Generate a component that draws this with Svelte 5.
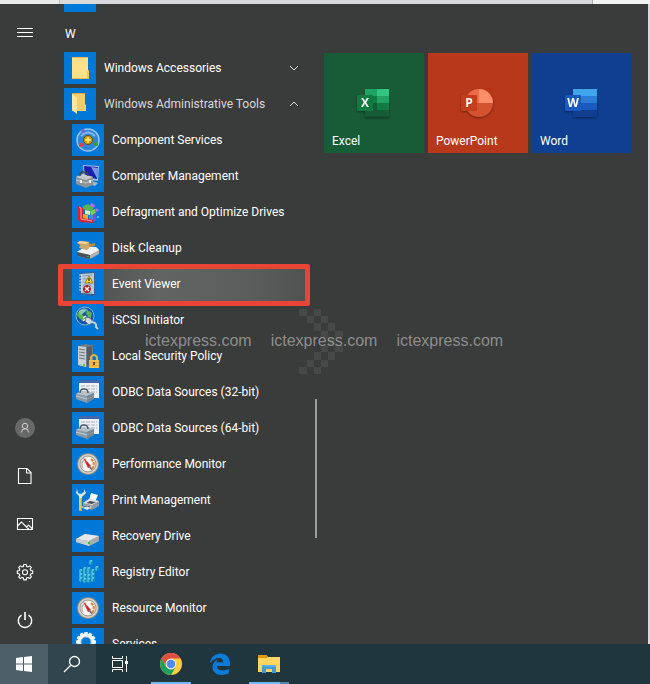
<script lang="ts">
    type App = { name: string; icon: string };

    const tools: App[] = [
        { name: "Component Services", icon: "component" },
        { name: "Computer Management", icon: "computer" },
        { name: "Defragment and Optimize Drives", icon: "defrag" },
        { name: "Disk Cleanup", icon: "cleanup" },
        { name: "Event Viewer", icon: "event" },
        { name: "iSCSI Initiator", icon: "iscsi" },
        { name: "Local Security Policy", icon: "security" },
        { name: "ODBC Data Sources (32-bit)", icon: "odbc" },
        { name: "ODBC Data Sources (64-bit)", icon: "odbc" },
        { name: "Performance Monitor", icon: "gauge" },
        { name: "Print Management", icon: "print" },
        { name: "Recovery Drive", icon: "recovery" },
        { name: "Registry Editor", icon: "registry" },
        { name: "Resource Monitor", icon: "gauge" },
        { name: "Services", icon: "services" },
    ];
    const tiles = ["Excel", "PowerPoint", "Word"];
    const rail = ["Account", "Documents", "Pictures", "Settings", "Power"];
    const teeth = [0, 30, 60, 90, 120, 150, 180, 210, 240, 270, 300, 330];
    const cubes = [
        [7, 14], [11, 15], [15, 15], [19, 14],
        [7, 18], [11, 19], [15, 19], [19, 18],
        [7, 22], [11, 23], [15, 23], [19, 22],
        [11, 12], [15, 12], [17, 5], [23, 11],
    ];
    // [column, row] of the checkered arrow behind the watermark
    const checks = [
        [0, 0], [2, 0], [1, 1], [3, 1], [2, 2], [4, 2], [3, 3], [5, 3], [4, 4],
        [3, 5], [5, 5], [2, 6], [4, 6], [1, 7], [3, 7], [0, 8], [2, 8],
    ];

    let toolsOpen = $state(true);
    let selected = $state("Event Viewer");
</script>

{#snippet appIcon(name: string)}
    <svg class="app-icon" viewBox="0 0 32 32" aria-hidden="true">
        {#if name === "folder"}
            <path d="M8 5h16v13l1 1v8H8z" fill="#ffe08a" />
            <path d="M8 5h16v1H8zM8 26h17v1H8z" fill="#e9bd55" />
            <path d="M23 20l2-2v8h-2z" fill="#f5c84c" />
        {:else if name === "folder-open"}
            <path d="M8 5h13v12l1 1v5H8z" fill="#f3cd6b" />
            <path d="M8 5h13v1H8z" fill="#d8a83b" />
            <path d="M8 6l5 4v16l-5-4z" fill="#ffe7a0" />
            <path d="M20 18l2-2v7h-2z" fill="#ffd65c" />
        {:else if name === "component"}
            <circle cx="16" cy="16" r="11" fill="#2a86d8" stroke="#9cc3e6" stroke-width="1.5" />
            <path d="M9 12q7-7 14 0" fill="none" stroke="#7eb9ea" stroke-width="2" />
            <circle cx="16" cy="16" r="4.5" fill="#d79b12" stroke="#6f4908" />
            <path d="M16 13v6M13 16h6" stroke="#ffed65" stroke-width="1.5" />
            <circle cx="11" cy="7" r="2" fill="#7866d8" />
            <circle cx="9" cy="21" r="2.2" fill="#d8454c" />
            <circle cx="24" cy="20" r="2.2" fill="#379c43" />
        {:else if name === "computer"}
            <path d="M11 5l16 1-1 15-14-2z" fill="#aebfe0" />
            <path d="M12 6l14 1-1 12-12-2z" fill="#1722a9" />
            <path d="M19 7l7 1-1 10z" fill="#7d91ee" />
            <path d="M20 21l6 2-3 3-5-2z" fill="#aeb6bd" />
            <path d="M4 17l7-3 10 3v8l-7 3-10-4z" fill="#8d959b" />
            <path d="M4 17l7-3 10 3-7 3z" fill="#c3c9cc" />
            <path d="M8 16q0-5 4-4 4 0 4 4" fill="none" stroke="#3f464b" stroke-width="1.5" />
            <path d="M4 20l10 3 7-3" fill="none" stroke="#c3c9cc" />
            <path d="M8 20h2v3H8zM17 20h2v3h-2z" fill="#eef0f1" />
        {:else if name === "defrag"}
            <path d="M6 10l5 2v10l11 1v4l-14-1-2-2z" fill="#d72332" />
            <path d="M7 11l2 1v11l11 2" fill="none" stroke="#ffaaa5" />
            <path d="M11 10l5-2 5 3v3l-4 1-6-2z" fill="#54b64d" />
            <path d="M13 14l5 1v4l-5-1z" fill="#d8efc8" />
            <path d="M18 15l5-2 1 5-5 2z" fill="#79ce54" />
            <path d="M11 18l5 1v4l-5-1z" fill="#edae25" />
            <path d="M17 19l4 1v4l-4-1z" fill="#358ce1" />
            <path d="M21 18l3-1v7l-3 2z" fill="#8e46c9" />
            <path d="M19 7l4 2-1 3-4-2zM24 12l3 2-2 2-2-2z" fill="#b46be8" />
            <path d="M25 20h2v2h-2z" fill="#36c5ed" />
        {:else if name === "cleanup"}
            <path d="M5 20l8-5h11l3 3v4l-9 5-13-3z" fill="#aeb2b4" />
            <path d="M5 20l8-5h11l3 3-9 5z" fill="#f0f1f1" />
            <path d="M5 20l13 3v4L5 24z" fill="#4b5155" />
            <path d="M8 9l9 1 1 5-3 3-8-2 1-3-3-2z" fill="#cda96c" />
            <path d="M8 9l9 1-3 2-9-1z" fill="#f0d69d" />
            <path d="M17 12l6-1v3l-5 1z" fill="#b88d4b" />
            <path d="M15 24h2v1h-2z" fill="#32ae48" />
        {:else if name === "event"}
            <path d="M7 5l16-1v23l-2 1-14-2z" fill="#3f608d" />
            <path d="M9 6l13-1v21l-13-1z" fill="#b6cbe0" />
            <path d="M11 8l9-1M11 11h9M11 14h9M11 17h9M11 24l9 1" stroke="#839fb9" />
            <path d="M7 7h3M7 10h3M7 13h3M7 16h3M7 19h3M7 22h3" stroke="#dfe8ee" />
            <path d="M17 8l4 7h-8z" fill="#ffdf28" stroke="#a57c09" />
            <path d="M17 10v3M17 14v1" stroke="#2f2b12" stroke-width="1.2" />
            <circle cx="15" cy="21" r="3.5" fill="#d82125" stroke="#8d1b1e" />
            <path d="M13 19l4 4M17 19l-4 4" stroke="#fff" stroke-width="1.3" />
        {:else if name === "iscsi"}
            <circle cx="13" cy="12" r="9" fill="#1653a4" stroke="#7fb9dc" />
            <path d="M6 8q4-4 8-2l-2 3-2 1 3 3-2 4-4-3-2-3zM15 6l5 3-1 5-3-1-2-4z" fill="#53b556" />
            <path d="M7 7q5-5 9-1l-8 5z" fill="#a9daef" opacity=".6" />
            <path d="M14 13l4 1 3 4-4 3-4-4z" fill="#d4dadd" stroke="#69747a" />
            <path d="M11 14l3-2M11 17l2-2" stroke="#f7f7f7" stroke-width="1.5" />
            <path d="M19 18q6 0 5 5l2 2" fill="none" stroke="#c9d0d4" stroke-width="2" />
        {:else if name === "security"}
            <path d="M6 6l7-2 8 1v20l-7 2-8-2z" fill="#737c83" />
            <path d="M6 6l8 1v20l-8-2z" fill="#c8cfd3" />
            <path d="M7 9l6 1M7 12l6 1M7 15l6 1M7 18l6 1" stroke="#69737b" />
            <path d="M15 7l5-1v18l-5 2z" fill="#535e66" />
            <path d="M11 24h2v2h-2z" fill="#58cf47" />
            <path d="M19 20v-3q3-4 6 0v3" fill="none" stroke="#d6b553" stroke-width="2" />
            <path d="M17 20h10v8H17z" fill="#e5a92d" />
            <path d="M17 21h10M17 24h10M17 27h10" stroke="#fbd673" />
            <path d="M22 22v3" stroke="#6b4a12" stroke-width="2" />
        {:else if name === "odbc"}
            <path d="M7 4h20v18H7z" fill="#eef1f4" />
            <path d="M7 4h20v3H7z" fill="#4266aa" />
            <path d="M9 10h16M9 13h16M9 16h16" stroke="#a6b2bf" stroke-dasharray="4 1" />
            <path d="M4 18l5-3 13 2v6l-7 4-11-4z" fill="#8a9ba8" />
            <path d="M4 18l5-3 13 2-7 3z" fill="#b4c1c9" />
            <path d="M8 17q0-4 4-4t4 4" fill="none" stroke="#4d5d69" stroke-width="1.5" />
            <path d="M4 20l11 3 7-3" fill="none" stroke="#c0cdd4" />
            <path d="M15 20v7l7-4v-6z" fill="#62737f" opacity=".5" />
        {:else if name === "gauge"}
            <circle cx="16" cy="16" r="11" fill="#8f8b85" />
            <circle cx="16" cy="16" r="10" fill="#d5d2cb" />
            <circle cx="16" cy="16" r="8" fill="#f7f4ee" stroke="#9b948c" />
            <path d="M11 20q-3-7 3-9" fill="none" stroke="#bbb8b1" stroke-width="1.5" />
            <path d="M19 11q5 4 1 10" fill="none" stroke="#e57932" stroke-width="2" stroke-dasharray="3 1" />
            <path d="M11 9l8 9-3 2z" fill="#d4202a" />
            <path d="M17 18l3 4" stroke="#71706d" stroke-width="1.5" />
        {:else if name === "print"}
            <path d="M5 5l1 4 3 1 3-2V5l2 4-4 4v3H7v-4L4 9z" fill="#dce5e9" />
            <path d="M7 14h3v13H7z" fill="#e5a51e" />
            <path d="M8 14v12" stroke="#ffe16c" />
            <path d="M17 16l2-7 7 2-3 7z" fill="#f7fbff" />
            <path d="M11 19l6-4 10 2v5l-7 4-9-3z" fill="#8f999f" />
            <path d="M11 19l6-4 10 2-7 4z" fill="#e5e9eb" />
            <path d="M14 19l4-2 6 1-4 2z" fill="#44515b" />
            <path d="M9 23l6-2 5 2-5 3z" fill="#dfe6ea" />
            <path d="M11 23l4-1 3 1" fill="none" stroke="#48545c" />
        {:else if name === "recovery"}
            <path d="M4 19l9-5 14 2v5l-10 5-13-4z" fill="#8e989d" />
            <path d="M4 19l9-5 14 2-10 5z" fill="#e6e8e9" />
            <path d="M4 19l13 2v5L4 22z" fill="#c8ced1" />
            <path d="M17 21l10-5v5l-10 5z" fill="#a5adb1" />
            <path d="M16 22h2v2h-2z" fill="#3fbb36" />
        {:else if name === "registry"}
            {#each cubes as [x, y]}
                <g transform="translate({x} {y})">
                    <path d="M0 0l2-1 2 1-2 1z" fill="#7adcf2" />
                    <path d="M0 0l2 1v3L0 3z" fill="#37b4dd" />
                    <path d="M4 0L2 1v3l2-1z" fill="#168eb8" />
                </g>
            {/each}
        {:else}
            <g transform="translate(14 14)">
                {#each teeth as angle}
                    <path d="M-1.5-10h3l1 4h-5z" fill="#edf6fa" transform="rotate({angle})" />
                {/each}
                <circle r="6.500" fill="none" stroke="#edf6fa" stroke-width="3" />
                <circle r="5" fill="none" stroke="#9ab3c2" />
            </g>
            <circle cx="23" cy="22" r="4" fill="none" stroke="#d5e3eb" stroke-width="2" />
        {/if}
    </svg>
{/snippet}

<div class="desktop">
    <div class="window-edge"><span></span></div>

    <main class="start-menu">
        <nav class="rail" aria-label="Start">
            <button class="rail-btn" aria-label="Expand">
                <svg width="16" height="16" viewBox="0 0 16 16" shape-rendering="crispEdges">
                    <path d="M0 4.5h16M0 8.5h16M0 12.5h16" stroke="#fff" />
                </svg>
            </button>
            <div class="rail-bottom">
                {#each rail as item}
                    <button class="rail-btn" aria-label={item}>
                        {#if item === "Account"}
                            <svg width="20" height="20" viewBox="0 0 20 20">
                                <circle cx="10" cy="10" r="10" fill="#696969" />
                                <g fill="none" stroke="#d0d0d0">
                                    <circle cx="10" cy="8" r="2.7" />
                                    <path d="M6.3 14.5q.3-3.8 3.7-3.8t3.7 3.8" />
                                </g>
                            </svg>
                        {:else}
                            <svg width="18" height="18" viewBox="0 0 18 18" fill="none" stroke="#fff" stroke-width="1.1">
                                {#if item === "Documents"}
                                    <path d="M2.5 1.5h8.5l4 4v11H2.5zM10.5 1.5V6H15" />
                                {:else if item === "Pictures"}
                                    <path d="M1.5 3.5h15v11h-15zM1.5 11l4-4 7.5 7.5M10.5 12l2-2 4 4" />
                                    <path d="M13 6.5h1" />
                                {:else if item === "Settings"}
                                    <path d="M7.8 1.5h2.4l.5 2 1.2.5 1.8-1.1 1.6 1.6-1.1 1.8.5 1.2 2 .5v2.4l-2 .5-.5 1.2 1.1 1.8-1.6 1.6-1.8-1.1-1.2.5-.5 2H7.8l-.5-2-1.2-.5-1.8 1.1-1.6-1.6 1.1-1.8-.5-1.2-2-.5V8l2-.5.5-1.2-1.1-1.8 1.6-1.6L6.1 4l1.2-.5z" />
                                    <circle cx="9" cy="9.2" r="2.5" />
                                {:else}
                                    <path d="M5.5 4.1a6.7 6.7 0 1 0 7 0" stroke-width="1.4" />
                                    <path d="M9 1v8" stroke-width="1.6" />
                                {/if}
                            </svg>
                        {/if}
                    </button>
                {/each}
            </div>
        </nav>

        <section class="apps">
            <div class="previous"><span></span></div>
            <h2>W</h2>
            <button class="row">
                {@render appIcon("folder")}
                <span class="label">Windows Accessories</span>
                <svg class="chevron" viewBox="0 0 10 6"><path d="M1 1l4 4 4-4" /></svg>
            </button>
            <button class="row open" aria-expanded={toolsOpen} onclick={() => (toolsOpen = !toolsOpen)}>
                {@render appIcon("folder-open")}
                <span class="label">Windows Administrative Tools</span>
                <svg class="chevron" viewBox="0 0 10 6"><path d="M1 5l4-4 4 4" /></svg>
            </button>
            {#if toolsOpen}
                {#each tools as tool}
                    <button
                        class="row child"
                        class:selected={selected === tool.name}
                        onclick={() => (selected = tool.name)}
                    >
                        {@render appIcon(tool.icon)}
                        <span class="label">{tool.name}</span>
                    </button>
                {/each}
            {/if}
            <div class="scroll-thumb"></div>
        </section>

        <section class="tiles">
            {#each tiles as tile}
                <button class="tile {tile.toLowerCase()}">
                    <svg width="34" height="32" viewBox="0 0 34 32" aria-hidden="true">
                        {#if tile === "Excel"}
                            <path d="M9 2h12v7H9z" fill="#21a366" />
                            <path d="M21 2h12v7H21z" fill="#33c481" />
                            <path d="M9 9h12v7H9z" fill="#107c41" />
                            <path d="M21 9h12v7H21z" fill="#21a366" />
                            <path d="M9 16h24v14H9z" fill="#185c37" />
                            <path d="M21 16h12v7H21z" fill="#107c41" />
                            <path d="M9 30h24" stroke="#124b2c" />
                            <rect x="1" y="8" width="16" height="16" rx="1" fill="#107c41" />
                            <text x="9" y="20">X</text>
                        {:else if tile === "PowerPoint"}
                            <circle cx="19" cy="16" r="14" fill="#d35230" />
                            <path d="M5 16A14 14 0 0 1 19 2v14z" fill="#ed6c47" />
                            <path d="M19 2a14 14 0 0 1 14 14H19z" fill="#ff8f6b" />
                            <rect x="1" y="8" width="16" height="16" rx="1" fill="#c43e1c" />
                            <text x="9" y="20">P</text>
                        {:else}
                            <path d="M9 2h24v7H9z" fill="#41a5ee" />
                            <path d="M9 9h24v7H9z" fill="#2b7cd3" />
                            <path d="M9 16h24v7H9z" fill="#185abd" />
                            <path d="M9 23h24v7H9z" fill="#103f91" />
                            <rect x="1" y="8" width="16" height="16" rx="1" fill="#185abd" />
                            <text x="9" y="20">W</text>
                        {/if}
                    </svg>
                    <span>{tile}</span>
                </button>
            {/each}
        </section>

        <svg class="arrow" viewBox="0 0 6 9" shape-rendering="crispEdges" aria-hidden="true">
            {#each checks as [x, y]}
                <rect {x} {y} width="1" height="1" />
            {/each}
        </svg>
        <div class="watermark">
            <span>ictexpress.com</span>
            <span>ictexpress.com</span>
            <span>ictexpress.com</span>
        </div>
    </main>

    <footer class="taskbar">
        <button class="task start" aria-label="Start">
            <svg width="16" height="16" viewBox="0 0 16 16" fill="#fff">
                <path d="M0 2l7-1v6.5H0zM8 .9L16 0v7.5H8zM0 8.5h7V15l-7-1zM8 8.5h8V16l-8-1z" />
            </svg>
        </button>
        <button class="task search" aria-label="Search">
            <svg width="18" height="18" viewBox="0 0 18 18" fill="none" stroke="#fff" stroke-width="1.3">
                <circle cx="11.5" cy="6.5" r="5" />
                <path d="M8 10l-7 7" />
            </svg>
        </button>
        <button class="task" aria-label="Task View">
            <svg width="16" height="16" viewBox="0 0 16 16" fill="none" stroke="#fff">
                <path d="M.5 0v2.500h10V0M.5 16v-2.500h10V16M.5 4.500h10v7H.5zM14.500 0v16" />
                <path d="M13 5h3v3h-3z" fill="#fff" stroke="none" />
            </svg>
        </button>
        <div class="pinned">
            <button class="task running" aria-label="Google Chrome">
                <svg width="22" height="22" viewBox="0 0 22 22">
                    <circle cx="11" cy="11" r="11" fill="#ffcd40" />
                    <path d="M1.5 5.5A11 11 0 0 1 20.5 5.5H11A5.5 5.5 0 0 0 6.2 13.7z" fill="#dd4f43" />
                    <path d="M1.5 5.5A11 11 0 0 0 11 22l4.8-8.3a5.5 5.5 0 0 1-9.6 0z" fill="#1aa15f" />
                    <circle cx="11" cy="11" r="5.2" fill="#f1f1f1" />
                    <circle cx="11" cy="11" r="4.2" fill="#4b8bf4" />
                </svg>
            </button>
            <button class="task" aria-label="Microsoft Edge">
                <svg width="22" height="22" viewBox="0 0 22 22">
                    <path d="M1 10C2 4 6 .5 11.5.5 17.5.5 21 5 21 10.5V13H7.8c.2 3 2.5 4.5 5.7 4.5 2.3 0 4.5-.6 6.3-1.7v4.5c-2 1.1-4.5 1.7-7 1.7C7 22 3.5 18.500 3.500 14c0-3.500 1.800-6 5-7.600C7.800 7.200 7.500 8.200 7.400 9.200h6.900C14.300 6.500 13 5 10 5 6.500 5 3.300 7 1 10z" fill="#0a7bd8" />
                </svg>
            </button>
            <button class="task running explorer" aria-label="File Explorer">
                <svg width="22" height="20" viewBox="0 0 22 20">
                    <path d="M0 1h8l2 2h12v15H0z" fill="#ffd660" />
                    <path d="M0 1h8l2 2-1 1H0z" fill="#e09a05" />
                    <path d="M4 11h14v8h-4v-4H8v4H4z" fill="#3d9bdc" />
                    <path d="M4 11h14v2H4z" fill="#56aee8" />
                </svg>
            </button>
        </div>
    </footer>
</div>

<style>
    :global(body) {
        margin: 0;
    }

    .desktop {
        height: 100vh;
        display: flex;
        flex-direction: column;
        background: #d9dadb;
        color: #fff;
        font-family: Roboto, "Open Sans", sans-serif;
        font-size: 12px;
        overflow: hidden;
    }

    button {
        margin: 0;
        padding: 0;
        border: 0;
        background: none;
        color: inherit;
        font: inherit;
        text-align: left;
    }

    svg {
        display: block;
        flex: none;
    }

    .window-edge {
        flex: none;
        height: 4px;
        display: flex;
        justify-content: space-between;
        background: #d9dadb;
    }
    .window-edge::before {
        content: "";
        width: 59px;
        background: #e8e9e9;
        border-right: 1px solid #bbb;
    }
    .window-edge span {
        width: 57px;
        background: #f2f2f2;
        border-left: 1px solid #aaa;
    }

    .start-menu {
        position: relative;
        flex: 1;
        min-height: 0;
        display: flex;
        margin-right: 2px;
        background: #3a3b3b;
        overflow: hidden;
    }

    .rail {
        flex: none;
        width: 48px;
        display: flex;
        flex-direction: column;
        justify-content: space-between;
        padding-top: 4px;
    }

    .rail-btn {
        width: 50px;
        height: 48px;
        display: flex;
        align-items: center;
        justify-content: center;
    }

    .apps {
        position: relative;
        flex: none;
        width: 248px;
        padding-left: 12px;
    }

    .previous {
        height: 10px;
        padding-left: 4px;
    }
    .previous span {
        display: block;
        width: 32px;
        height: 8px;
        background: #0078d7;
    }

    h2 {
        margin: 0;
        padding: 2px 0 0 5px;
        height: 34px;
        font-size: 12px;
        font-weight: 400;
        line-height: 36px;
    }

    .row {
        position: relative;
        width: 100%;
        height: 36px;
        display: flex;
        align-items: center;
        gap: 8px;
        padding: 0 9px 0 4px;
        line-height: 16px;
        white-space: nowrap;
    }
    .child {
        padding-left: 12px;
    }
    .open .label {
        color: #d8d8d8;
    }
    .selected {
        background: linear-gradient(90deg, #484949, #626363 40%, #5c5d5d 75%, #505151);
    }
    .selected::after {
        content: "";
        position: absolute;
        inset: -2px -2px -4px;
        border: 5px solid #e94435;
        border-radius: 2px;
    }

    .label {
        flex: 1;
    }

    .app-icon {
        width: 32px;
        height: 32px;
        background: #0078d7;
    }

    .chevron {
        width: 10px;
        height: 6px;
        fill: none;
        stroke: #ddd;
    }

    .scroll-thumb {
        position: absolute;
        top: 395px;
        right: -9px;
        width: 2px;
        height: 139px;
        background: #9b9b9b;
    }

    .tiles {
        display: grid;
        grid-template-columns: repeat(3, 100px);
        grid-auto-rows: 100px;
        gap: 4px;
        padding: 49px 16px;
    }

    .tile {
        display: flex;
        flex-direction: column;
        align-items: center;
        justify-content: space-between;
        padding: 34px 10px 4px 8px;
    }
    .tile svg {
        filter: drop-shadow(0 1px 1px rgba(0, 0, 0, 0.4));
    }
    .tile span {
        align-self: flex-start;
        line-height: 16px;
    }
    .tile text {
        fill: #fff;
        font-family: "Open Sans", sans-serif;
        font-size: 12px;
        font-weight: 700;
        text-anchor: middle;
    }
    .excel {
        background: #185c37;
    }
    .powerpoint {
        background: #b7381a;
    }
    .word {
        background: #103f91;
    }

    .arrow {
        position: absolute;
        left: 299px;
        top: 305px;
        width: 44px;
        height: 65px;
        fill: rgba(255, 255, 255, 0.07);
    }

    .watermark {
        position: absolute;
        left: 145px;
        top: 328px;
        display: flex;
        gap: 19px;
        color: rgba(190, 190, 190, 0.65);
        font-family: "Liberation Sans", Arial, sans-serif;
        font-size: 16px;
        line-height: 18px;
        pointer-events: none;
    }

    .taskbar {
        flex: none;
        height: 40px;
        display: flex;
        background: #20363f;
    }

    .task {
        position: relative;
        width: 48px;
        height: 40px;
        display: flex;
        align-items: center;
        justify-content: center;
    }
    .start {
        background: #4d6068;
    }
    .search {
        background: #30454e;
    }
    .pinned {
        display: flex;
        gap: 1px;
        margin-left: 3px;
    }
    .running::after {
        content: "";
        position: absolute;
        left: 4px;
        right: 4px;
        bottom: 0;
        height: 2px;
        background: #76b9ed;
    }
    .explorer::after {
        background: linear-gradient(90deg, #76b9ed 31px, #5585a9 31px);
    }
</style>
